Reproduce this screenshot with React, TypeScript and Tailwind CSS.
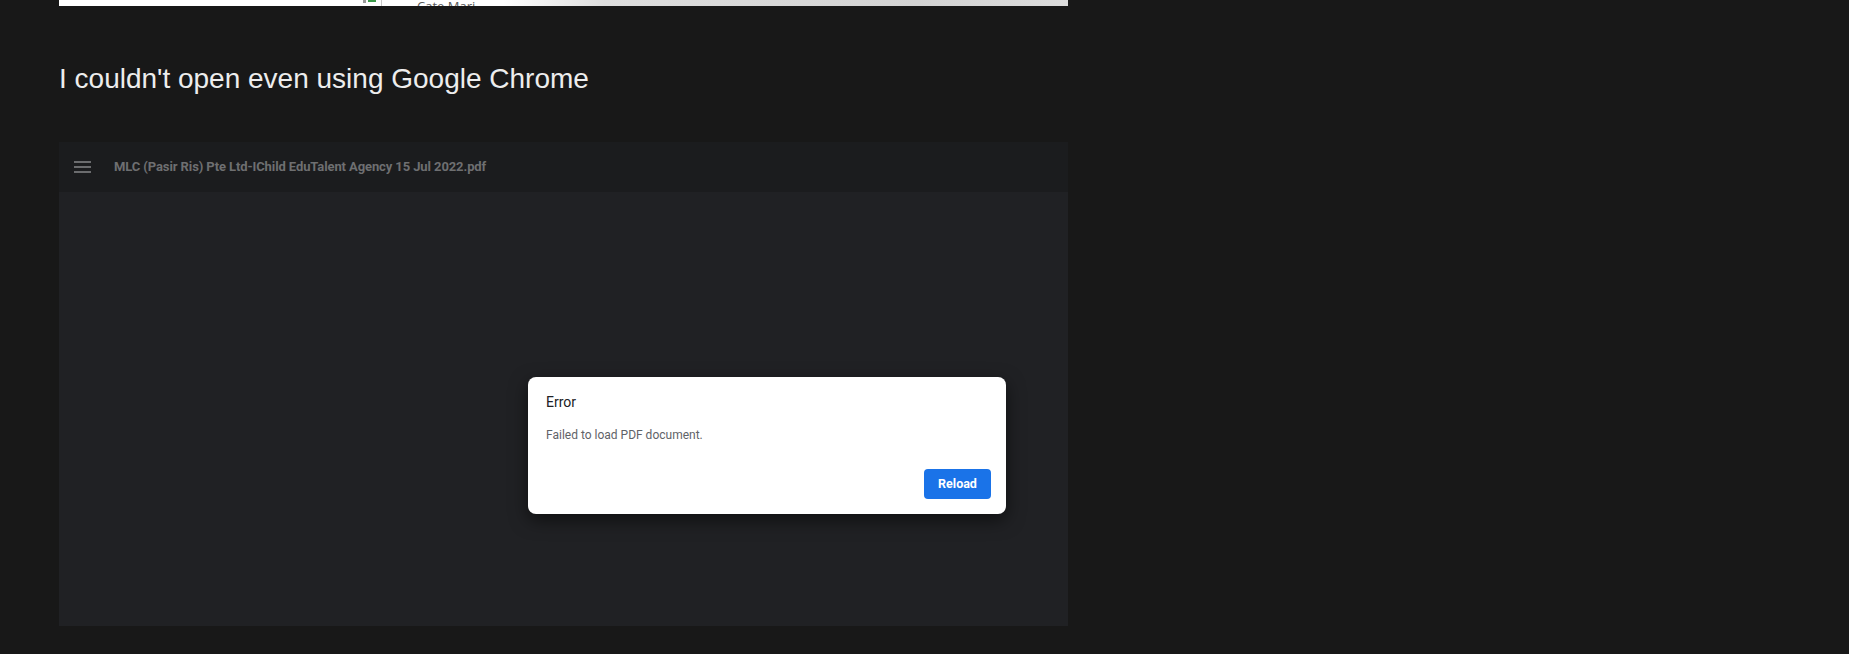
import React from 'react'

function MenuIcon() {
	return (
		<svg width="17" height="12" viewBox="0 0 17 12" className="text-[#6b6c6e]">
			<rect x="0" y="0" width="17" height="2" fill="currentColor" />
			<rect x="0" y="5" width="17" height="2" fill="currentColor" />
			<rect x="0" y="10" width="17" height="2" fill="currentColor" />
		</svg>
	)
}

function ErrorDialog() {
	return (
		<div
			className="w-[478px] h-[137px] rounded-lg bg-white flex flex-col pt-[15px] pl-[18px] pr-[15px] pb-[15px] shadow-[0_6px_18px_rgba(0,0,0,0.55)]"
			style={{ fontFamily: 'Roboto, "Noto Sans", sans-serif' }}
		>
			<p className="text-[14px] leading-[20px] text-[#202124]">Error</p>
			<p className="mt-[14px] text-[12px] leading-[18px] text-[#5f6368]">Failed to load PDF document.</p>
			<div className="mt-auto flex justify-end">
				<button className="w-[67px] h-[30px] rounded-[4px] bg-[#1a73e8] text-white text-[12.5px] font-bold flex items-center justify-center">
					Reload
				</button>
			</div>
		</div>
	)
}

export default function App() {
	return (
		<div className="min-h-[654px] w-full bg-[#181818] pl-[59px] overflow-hidden">
			<div className="w-[1009px]">
				{/* cropped screenshot strip from the previous post */}
				<div className="h-[6px] overflow-hidden flex bg-[linear-gradient(to_right,#ffffff_0%,#ffffff_44%,#dedede_54%,#d3d3d3_85%,#dcdcdc_100%)]">
					<div className="w-[300px] shrink-0" />
					<div className="w-[23px] shrink-0 border-r border-[#c8c8c8] flex gap-[2px] pl-[4px]">
						<div className="w-[3px] h-[3px] bg-[#9a9a9a]" />
						<div className="w-[8px] h-[2px] bg-[#3c9a4a]" />
					</div>
					<span
						className="pl-[35px] text-[13px] leading-none text-[#5a5a5a]"
						style={{ fontFamily: '"Open Sans", "Noto Sans", sans-serif' }}
					>
						Cate Mari
					</span>
				</div>

				<h2
					className="mt-[57px] h-[32px] text-[28px] leading-[32px] text-[#ededed]"
					style={{ fontFamily: '"Liberation Sans", Arial, sans-serif' }}
				>
					I couldn't open even using Google Chrome
				</h2>

				<div className="mt-[47px]">
					<div className="h-[50px] bg-[#1b1c1e] flex items-center pl-[15px] pb-[1px]">
						<MenuIcon />
						<span
							className="ml-[23px] text-[13px] font-bold tracking-[-0.1px] text-[#6e6f71]"
							style={{ fontFamily: 'Roboto, "Noto Sans", sans-serif' }}
						>
							MLC (Pasir Ris) Pte Ltd-IChild EduTalent Agency 15 Jul 2022.pdf
						</span>
					</div>
					<div className="h-[434px] bg-[#202124] pl-[469px] pt-[185px]">
						<ErrorDialog />
					</div>
				</div>
			</div>
		</div>
	)
}
